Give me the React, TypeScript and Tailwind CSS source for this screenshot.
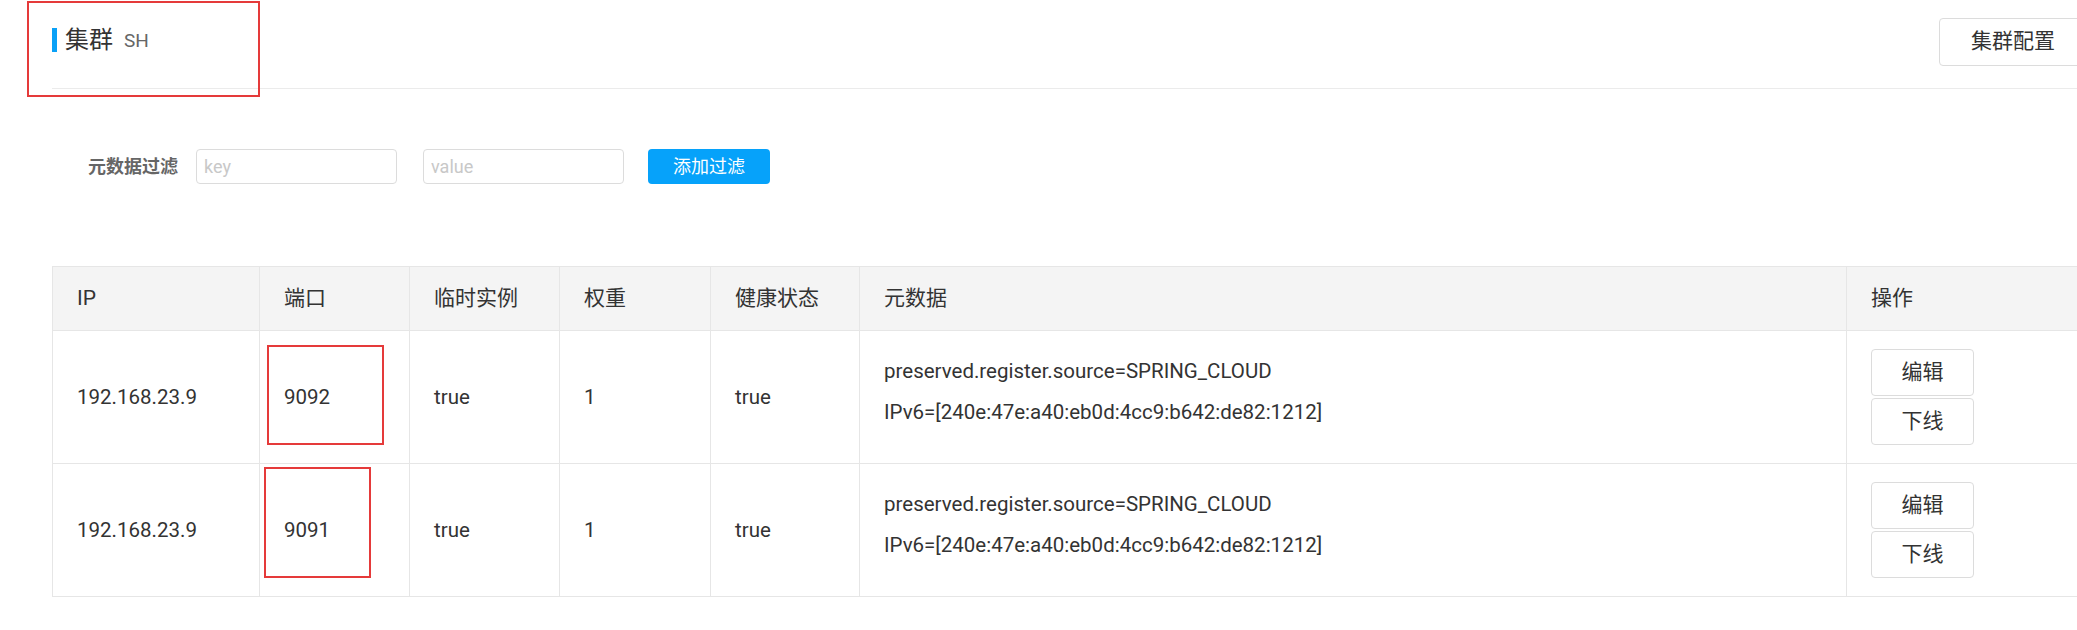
import React from "react";

const rows = [
  { ip: "192.168.23.9", port: "9092" },
  { ip: "192.168.23.9", port: "9091" },
];

const meta = [
  "preserved.register.source=SPRING_CLOUD",
  "IPv6=[240e:47e:a40:eb0d:4cc9:b642:de82:1212]",
];

const font = {
  fontFamily: '"Roboto", "Noto Sans CJK SC", "Noto Sans", sans-serif',
};

export default function App() {
  const th =
    "h-[64px] border border-[#e6e6e6] bg-[#f4f4f4] pl-[24px] text-left align-middle font-normal";
  const td = "h-[133px] border border-[#e6e6e6] pl-[24px] text-left align-middle";

  return (
    <div
      className="relative h-[630px] w-[2077px] overflow-hidden bg-white text-[21px] text-[#333]"
      style={font}
    >
      <div className="w-[2100px]">
        {/* header */}
        <div className="ml-[52px] mr-[13px] flex h-[89px] items-start justify-between border-b border-[#ebebeb] pt-[18px]">
          <div className="mt-[10px] flex h-[24px] items-center">
            <div className="h-[24px] w-[5px] bg-[#0aa1f7]" />
            <span className="ml-[8px] text-[24px] leading-none text-[#333]">集群</span>
            <span className="ml-[11px] text-[19px] leading-none text-[#666]">SH</span>
          </div>
          <button className="h-[48px] rounded-[4px] border border-[#dcdcdc] bg-white px-[31px] text-[21px] text-[#333]">
            集群配置
          </button>
        </div>

        {/* filter */}
        <div className="mt-[60px] flex h-[35px] items-center pl-[88px]">
          <span className="text-[18px] font-bold text-[#666]">元数据过滤</span>
          <input
            placeholder="key"
            className="ml-[18px] h-[35px] w-[201px] rounded-[4px] border border-[#dcdcdc] px-[7px] text-[18px] outline-none placeholder:text-[#c8c8c8]"
          />
          <input
            placeholder="value"
            className="ml-[26px] h-[35px] w-[201px] rounded-[4px] border border-[#dcdcdc] px-[7px] text-[18px] outline-none placeholder:text-[#c8c8c8]"
          />
          <button className="ml-[24px] h-[35px] w-[122px] rounded-[4px] bg-[#06a2fa] text-[18px] text-white">
            添加过滤
          </button>
        </div>

        {/* table */}
        <table className="ml-[52px] mt-[82px] border-collapse">
          <thead>
            <tr>
              <th className={`${th} w-[207px]`}>IP</th>
              <th className={`${th} w-[150px]`}>端口</th>
              <th className={`${th} w-[150px]`}>临时实例</th>
              <th className={`${th} w-[151px]`}>权重</th>
              <th className={`${th} w-[149px]`}>健康状态</th>
              <th className={`${th} w-[987px]`}>元数据</th>
              <th className={`${th} w-[250px]`}>操作</th>
            </tr>
          </thead>
          <tbody className="text-[20.5px]">
            {rows.map((r) => (
              <tr key={r.port}>
                <td className={td}>{r.ip}</td>
                <td className={td}>{r.port}</td>
                <td className={td}>true</td>
                <td className={td}>1</td>
                <td className={td}>true</td>
                <td className={td}>
                  <div className="flex flex-col gap-[11px] pb-[12px]">
                    {meta.map((m) => (
                      <div key={m} className="h-[30px] leading-[30px]">
                        {m}
                      </div>
                    ))}
                  </div>
                </td>
                <td className={td}>
                  <div className="flex w-[103px] flex-col gap-[2px]">
                    <button className="h-[47px] rounded-[4px] border border-[#dcdcdc] bg-white text-[21px] text-[#333]">
                      编辑
                    </button>
                    <button className="h-[47px] rounded-[4px] border border-[#dcdcdc] bg-white text-[21px] text-[#333]">
                      下线
                    </button>
                  </div>
                </td>
              </tr>
            ))}
          </tbody>
        </table>
      </div>

      {/* red annotation boxes */}
      <div className="pointer-events-none absolute left-[27px] top-[1px] h-[96px] w-[233px] border-2 border-[#e53a3a]" />
      <div className="pointer-events-none absolute left-[267px] top-[345px] h-[100px] w-[117px] border-2 border-[#e53a3a]" />
      <div className="pointer-events-none absolute left-[264px] top-[467px] h-[111px] w-[107px] border-2 border-[#e53a3a]" />
    </div>
  );
}
